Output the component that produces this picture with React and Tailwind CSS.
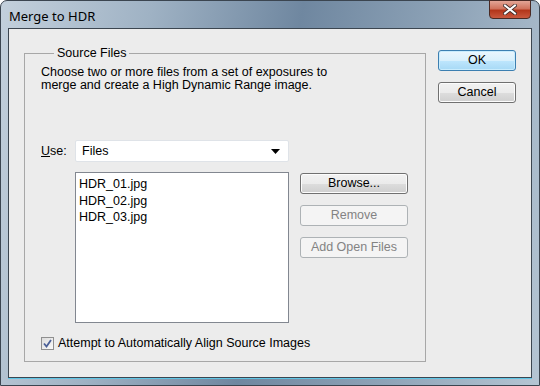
import React from 'react';

const FONT = "font-['Liberation_Sans',Arial,sans-serif]";

function WinButton({ children, variant = 'normal', width = 'w-[108px]' }) {
  const base = `${width} h-[21px] rounded-[3px] border text-[12.5px] flex items-center justify-center`;
  if (variant === 'default')
    return (
      <button className={`${base} border-[#3c7fb1] bg-[linear-gradient(to_bottom,#eaf6fd_0%,#d9f0fc_50%,#bee6fd_51%,#a7d9f5_100%)] text-black shadow-[inset_0_0_0_1px_#c9ecfd]`}>
        {children}
      </button>
    );
  if (variant === 'disabled')
    return (
      <button className={`${base} border-[#adb2b5] bg-[#f4f4f4] text-[#838383]`}>{children}</button>
    );
  return (
    <button
      className={`${base} border-[#707070] bg-[linear-gradient(to_bottom,#f2f2f2_0%,#ebebeb_50%,#dddddd_51%,#cfcfcf_100%)] text-black shadow-[inset_0_0_0_1px_#fcfcfc]`}
    >
      {children}
    </button>
  );
}

export default function App() {
  const files = ['HDR_01.jpg', 'HDR_02.jpg', 'HDR_03.jpg'];

  return (
    <div
      className={`${FONT} w-[540px] h-[386px] flex flex-col rounded-t-[7px] border border-[#3b4550] bg-[linear-gradient(100deg,#c3d0dc_0%,#9fb2c4_25%,#6f87a0_50%,#8fa4b8_75%,#b5c5d3_100%)] text-black`}
    >
      {/* ── Title bar ── */}
      <div className="h-[27px] flex items-start justify-between pl-[8px] pr-[8px]">
        <span className="text-[13px] mt-[6px] font-['Noto_Sans',sans-serif] text-black">Merge to HDR</span>
        <div className="w-[42px] h-[19px] -mt-px rounded-b-[4px] border border-[#4a2a24] bg-[linear-gradient(to_bottom,#e3a596_0%,#d0735c_45%,#b3361b_55%,#c9583e_100%)] flex items-center justify-center">
          <svg width="14" height="11" viewBox="0 0 14 11">
            <path d="M2 1.5 L12 9.5 M12 1.5 L2 9.5" stroke="#3a2a28" strokeWidth="3.6" strokeLinecap="square" />
            <path d="M2 1.5 L12 9.5 M12 1.5 L2 9.5" stroke="#ffffff" strokeWidth="2" strokeLinecap="square" />
          </svg>
        </div>
      </div>

      {/* ── Client area ── */}
      <div className="flex-1 mx-[7px] mb-[7px] border border-[#3c4650] bg-[#ececec] flex pl-[15px] pt-[17px] shadow-[0_1px_0_#5fc6e6]">
        {/* Group box */}
        <fieldset className="w-[402px] h-[316px] shrink-0 border border-[#a7a7a7] pl-[16px] pr-[10px] m-0">
          <legend className="ml-[13px] px-[3px] text-[12.5px] leading-[14px]">Source Files</legend>
          <p className="mt-[6px] text-[12.5px] leading-[13px] w-[310px]">
            Choose two or more files from a set of exposures to merge and create a High Dynamic Range image.
          </p>

          <div className="mt-[48px] flex items-center">
            <span className="w-[34px] text-[12.5px]">
              <span className="underline">U</span>se:
            </span>
            <div className="w-[214px] h-[22px] bg-white border border-[#dfe3e8] rounded-[2px] flex items-center justify-between pl-[6px] pr-[8px] text-[12.5px]">
              <span>Files</span>
              <svg width="9" height="5" viewBox="0 0 9 5">
                <path d="M0 0 H9 L4.5 5 Z" fill="#000" />
              </svg>
            </div>
          </div>

          <div className="mt-[10px] flex">
            <div className="ml-[34px] w-[214px] h-[151px] bg-white border border-[#828790] pl-[3px] pt-[3px] text-[12.5px] leading-[16.5px]">
              {files.map((f) => (
                <div key={f}>{f}</div>
              ))}
            </div>
            <div className="ml-[11px] mt-px flex flex-col gap-[11px]">
              <WinButton>Browse...</WinButton>
              <WinButton variant="disabled">Remove</WinButton>
              <WinButton variant="disabled">Add Open Files</WinButton>
            </div>
          </div>

          <label className="mt-[11px] flex items-center gap-[4px] text-[12.5px]">
            <span className="w-[13px] h-[13px] border border-[#8f8f8f] bg-[linear-gradient(135deg,#dcdcdc,#fafafa)] flex items-center justify-center">
              <svg width="9" height="9" viewBox="0 0 9 9">
                <path d="M1 4.5 L3.5 7.5 L8 1" stroke="#4a5f97" strokeWidth="1.8" fill="none" />
              </svg>
            </span>
            Attempt to Automatically Align Source Images
          </label>
        </fieldset>

        {/* Dialog buttons */}
        <div className="ml-[12px] pt-[4px] flex flex-col gap-[11px]">
          <WinButton variant="default" width="w-[78px]">OK</WinButton>
          <WinButton width="w-[78px]">Cancel</WinButton>
        </div>
      </div>
    </div>
  );
}
